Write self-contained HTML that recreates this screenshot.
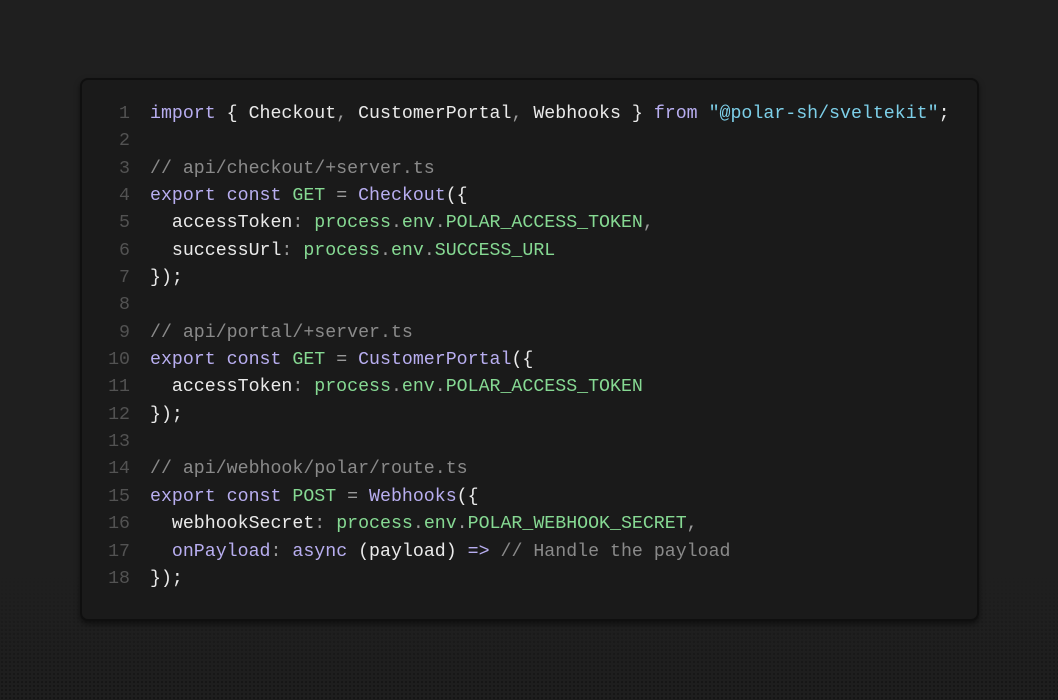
<!DOCTYPE html>
<html><head><meta charset="utf-8"><style>
html,body{margin:0;padding:0;}
body{width:1058px;height:700px;background:#1e1e1e;position:relative;overflow:hidden;
background-image:radial-gradient(rgba(0,0,0,0.45) 1px,transparent 1.3px);background-size:4px 4px;}
.fade{position:absolute;left:0;top:0;width:1058px;height:700px;background:linear-gradient(#1f1f1f 0%,#1f1f1f 82%,rgba(31,31,31,0.3) 100%);}
.box{position:absolute;left:80px;top:78px;width:895px;height:539px;background:#1a1a1a;border:2px solid #0f0f0f;border-radius:8px;box-shadow:0 3px 6px rgba(0,0,0,.5);}
.code{position:absolute;left:96px;top:101px;font-family:"Liberation Mono",monospace;font-size:18.25px;color:#eaeaea;}
.l{height:27.35px;line-height:27.35px;white-space:pre;}
.n{display:inline-block;width:34px;text-align:right;color:#525252;margin-right:20px;}
.k{color:#b8aef0}.g{color:#86d993}.s{color:#7dcfe8}.c{color:#8a8a8a}.p{color:#9a9a9a}
</style></head><body>
<div class="fade"></div>
<div class="box"></div>
<div class="code">
<div class="l"><span class="n">1</span><span class="k">import</span> { Checkout<span class="p">,</span> CustomerPortal<span class="p">,</span> Webhooks } <span class="k">from</span> <span class="s">"@polar-sh/sveltekit"</span>;</div>
<div class="l"><span class="n">2</span></div>
<div class="l"><span class="n">3</span><span class="c">// api/checkout/+server.ts</span></div>
<div class="l"><span class="n">4</span><span class="k">export const</span> <span class="g">GET</span> <span class="p">=</span> <span class="k">Checkout</span>({</div>
<div class="l"><span class="n">5</span>  accessToken<span class="p">:</span> <span class="g">process</span><span class="p">.</span><span class="g">env</span><span class="p">.</span><span class="g">POLAR_ACCESS_TOKEN</span><span class="p">,</span></div>
<div class="l"><span class="n">6</span>  successUrl<span class="p">:</span> <span class="g">process</span><span class="p">.</span><span class="g">env</span><span class="p">.</span><span class="g">SUCCESS_URL</span></div>
<div class="l"><span class="n">7</span>});</div>
<div class="l"><span class="n">8</span></div>
<div class="l"><span class="n">9</span><span class="c">// api/portal/+server.ts</span></div>
<div class="l"><span class="n">10</span><span class="k">export const</span> <span class="g">GET</span> <span class="p">=</span> <span class="k">CustomerPortal</span>({</div>
<div class="l"><span class="n">11</span>  accessToken<span class="p">:</span> <span class="g">process</span><span class="p">.</span><span class="g">env</span><span class="p">.</span><span class="g">POLAR_ACCESS_TOKEN</span></div>
<div class="l"><span class="n">12</span>});</div>
<div class="l"><span class="n">13</span></div>
<div class="l"><span class="n">14</span><span class="c">// api/webhook/polar/route.ts</span></div>
<div class="l"><span class="n">15</span><span class="k">export const</span> <span class="g">POST</span> <span class="p">=</span> <span class="k">Webhooks</span>({</div>
<div class="l"><span class="n">16</span>  webhookSecret<span class="p">:</span> <span class="g">process</span><span class="p">.</span><span class="g">env</span><span class="p">.</span><span class="g">POLAR_WEBHOOK_SECRET</span><span class="p">,</span></div>
<div class="l"><span class="n">17</span>  <span class="k">onPayload</span><span class="p">:</span> <span class="k">async</span> (payload) <span class="k">=&gt;</span> <span class="c">// Handle the payload</span></div>
<div class="l"><span class="n">18</span>});</div>
</div>
</body></html>
